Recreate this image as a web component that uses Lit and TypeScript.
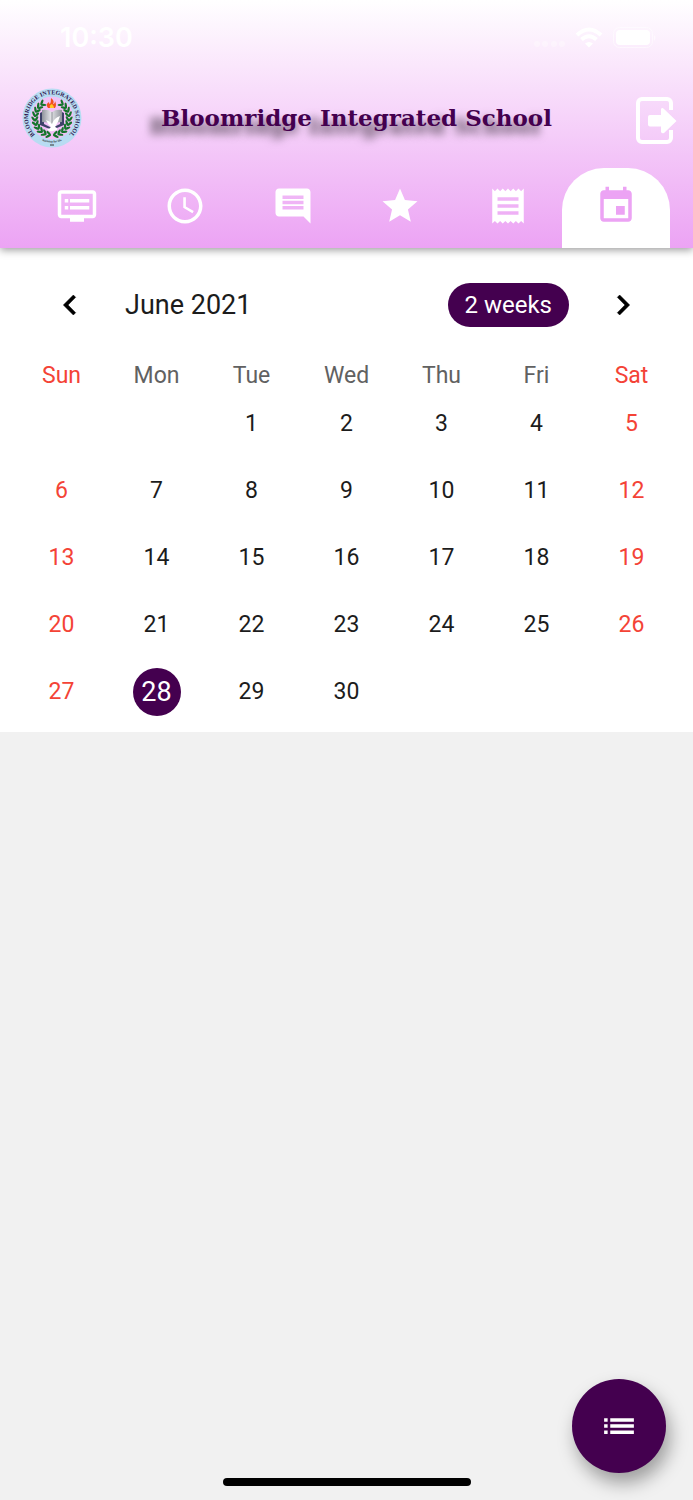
import { LitElement, html, css, svg } from "lit";
import { customElement, state } from "lit/decorators.js";
import { classMap } from "lit/directives/class-map.js";

const WEEKDAYS = ["Sun", "Mon", "Tue", "Wed", "Thu", "Fri", "Sat"];

const TABS = [
  {
    label: "Notice board",
    path: "M21 3H3c-1.1 0-2 .9-2 2v12c0 1.1.9 2 2 2h5v2h8v-2h5c1.1 0 1.99-.9 1.99-2L23 5c0-1.1-.9-2-2-2zm0 14H3V5h18v12zm-2-9H8v2h11V8zm0 4H8v2h11v-2zM7 8H5v2h2V8zm0 4H5v2h2v-2z",
  },
  {
    label: "Timetable",
    path: "M11.99 2C6.47 2 2 6.48 2 12s4.47 10 9.99 10C17.52 22 22 17.52 22 12S17.52 2 11.99 2zM12 20c-4.42 0-8-3.58-8-8s3.58-8 8-8 8 3.58 8 8-3.58 8-8 8zm.5-13H11v6l5.25 3.15.75-1.23-4.5-2.67z",
  },
  {
    label: "Messages",
    path: "M21.99 4c0-1.1-.89-2-1.99-2H4c-1.1 0-2 .9-2 2v12c0 1.1.9 2 2 2h14l4 4-.01-18zM18 14H6v-2h12v2zm0-3H6V9h12v2zm0-3H6V6h12v2z",
  },
  {
    label: "Results",
    path: "M12 17.27L18.18 21l-1.64-7.03L22 9.24l-7.19-.61L12 2 9.19 8.63 2 9.24l5.46 4.73L5.82 21z",
  },
  {
    label: "Receipts",
    path: "M18 17H6v-2h12v2zm0-4H6v-2h12v2zm0-4H6V7h12v2zM3 22l1.5-1.5L6 22l1.5-1.5L9 22l1.5-1.5L12 22l1.5-1.5L15 22l1.5-1.5L18 22l1.5-1.5L21 22V2l-1.5 1.5L18 2l-1.5 1.5L15 2l-1.5 1.5L12 2l-1.5 1.5L9 2 7.5 3.5 6 2 4.5 3.5 3 2v20z",
  },
  {
    label: "Calendar",
    path: "M17 12h-5v5h5v-5zM16 1v2H8V1H6v2H5c-1.11 0-1.99.9-1.99 2L3 19c0 1.1.89 2 2 2h14c1.1 0 2-.9 2-2V5c0-1.1-.9-2-2-2h-1V1h-2zm3 18H5V8h14v11z",
  },
];

@customElement("school-crest")
export class SchoolCrest extends LitElement {
  static styles = css`
    :host { display: block; width: 60px; height: 60px; }
    .crest { display: block; width: 100%; height: 100%; overflow: visible; }
    .ring-text { font: bold 6px "Liberation Serif", serif; fill: #2f1550; }
    .motto { font: bold 3px "Liberation Serif", serif; fill: #222; }
  `;

  render() {
    const leaves = [];
    for (let i = 0; i < 10; i++) {
      const a = 12 + i * 15;
      for (const side of [1, -1]) {
        const turn = side * (180 - a);
        leaves.push(svg`<g transform=${`rotate(${turn} 30 30)`}>
          <ellipse cx="30" cy="11.4" rx="3" ry="1.2" transform=${`rotate(${side * 35} 30 11.4)`}></ellipse>
          <ellipse cx="30" cy="14.4" rx="3" ry="1.2" transform=${`rotate(${side * -35} 30 14.4)`}></ellipse>
        </g>`);
      }
    }
    return html`<svg class="crest" viewBox="0 0 60 60" role="img" aria-label="School crest">
      <defs>
        <path id="ring" d="M15 48.5A23.800 23.800 0 1 1 45 48.5"></path>
        <path id="base" d="M18 52Q30 57 42 52"></path>
        <linearGradient id="page" x1="0" x2="1">
          <stop offset="0" stop-color="#8f939b"></stop>
          <stop offset=".45" stop-color="#e4e5e8"></stop>
          <stop offset="1" stop-color="#8f939b"></stop>
        </linearGradient>
      </defs>
      <circle cx="30" cy="30" r="29.5" fill="#b8dcf2"></circle>
      <circle cx="30" cy="30" r="21.5" fill="#f2c0f6"></circle>
      <g fill="#14752c">${leaves}</g>
      <path d="M18 25l4-2v13l8 4 8-4V23l4 2v12l-12 5-12-5z" fill="#3d4268"></path>
      <path d="M20 22q6-1 10 2q4-3 10-2v12q-6 0-10 3q-4-3-10-3z" fill="url(#page)"></path>
      <path d="M30 24v12" stroke="#70747d" stroke-width=".7"></path>
      <path d="M26 20q-3-4 1-6q0 2 1 2q1-2 1-6q4 3 2 6q2 0 2-3q2 4 0 7z" fill="#f4511e"></path>
      <path d="M28 20q-1-3 2-4q2 2 2 4z" fill="#ffc928"></path>
      <path d="M24 32q4 1 6 4q2-6 8-8q-2 7-5 11q3 1 2 3l-4 1q-4 1-6-2q3 0 4-2q-3-2-5-7z" fill="#fff"></path>
      <text class="ring-text"><textPath href="#ring" startOffset="50%" text-anchor="middle">BLOOMRIDGE INTEGRATED SCHOOL</textPath></text>
      <text class="motto"><textPath href="#base" startOffset="50%" text-anchor="middle">learning for life</textPath></text>
      <path d="M28 56.500h4v1h-4z" fill="#333"></path>
    </svg>`;
  }
}

@customElement("month-calendar")
export class MonthCalendar extends LitElement {
  static styles = css`
    :host { display: block; background: #fff; padding: 28px 14px 7px; }
    button { font: inherit; color: inherit; border: 0; background: none; padding: 0; cursor: pointer; }
    .bar { display: flex; align-items: center; height: 58px; padding: 0 28px; }
    .arrow { display: grid; place-items: center; width: 56px; height: 56px; color: #000; }
    .arrow svg { width: 40px; height: 40px; fill: currentColor; }
    .month { flex: 1; margin: 0; padding-left: 27px; font-size: 27px; font-weight: 400; line-height: 40px; }
    .format { height: 44px; padding: 0 17px; margin-right: 26px; border-radius: 22px; background: #44004f; color: #fff; font-size: 24px; }
    .grid { width: 100%; table-layout: fixed; border-collapse: collapse; margin-top: 28px; }
    .grid th { height: 28px; padding: 0; font-size: 23px; font-weight: 400; line-height: 28px; color: #616161; }
    .grid td { height: 67px; padding: 0; text-align: center; }
    .day { width: 48px; height: 48px; border-radius: 50%; font-size: 23px; line-height: 48px; }
    .grid .weekend { color: #f44336; }
    .grid .selected { background: #44004f; color: #fff; font-size: 27px; }
  `;

  @state() private selected = 28;

  private weeks(): (number | null)[][] {
    const first = new Date(2021, 5, 1).getDay();
    return Array.from({ length: 5 }, (_, w) =>
      WEEKDAYS.map((_, d) => {
        const n = w * 7 + d - first + 1;
        return n >= 1 && n <= 30 ? n : null;
      })
    );
  }

  render() {
    const weekend = (i: number) => i === 0 || i === 6;
    return html`
      <div class="bar">
        <button class="arrow" aria-label="Previous month">
          <svg viewBox="0 0 24 24"><path d="M15.41 7.41L14 6l-6 6 6 6 1.41-1.41L10.83 12z" stroke="#000" stroke-width=".3"></path></svg>
        </button>
        <h2 class="month">June 2021</h2>
        <button class="format">2 weeks</button>
        <button class="arrow" aria-label="Next month">
          <svg viewBox="0 0 24 24"><path d="M10 6L8.59 7.41 13.17 12l-4.58 4.59L10 18l6-6z" stroke="#000" stroke-width=".3"></path></svg>
        </button>
      </div>
      <table class="grid">
        <thead>
          <tr>${WEEKDAYS.map((d, i) => html`<th scope="col" class=${classMap({ weekend: weekend(i) })}>${d}</th>`)}</tr>
        </thead>
        <tbody>
          ${this.weeks().map(
            (week) => html`<tr>
              ${week.map((n, i) =>
                n === null
                  ? html`<td></td>`
                  : html`<td><button
                      class=${classMap({ day: true, weekend: weekend(i), selected: n === this.selected })}
                      @click=${() => (this.selected = n)}
                    >${n}</button></td>`
              )}
            </tr>`
          )}
        </tbody>
      </table>
    `;
  }
}

@customElement("app-root")
export class AppRoot extends LitElement {
  static styles = css`
    :host {
      display: flex;
      flex-direction: column;
      position: relative;
      min-height: 100vh;
      background: #f1f1f1;
      color: #1c1c1c;
      font-family: Roboto, "Liberation Sans", sans-serif;
    }
    button { border: 0; background: none; padding: 0; cursor: pointer; }
    .header {
      position: relative;
      background: linear-gradient(#fff, #eca3f4);
      box-shadow: 0 2px 8px rgba(0, 0, 0, 0.4);
    }
    .status { display: flex; align-items: center; height: 76px; padding: 0 36px 0 60px; color: #fff; }
    .time { flex: 1; font: 600 27px/32px Inter, sans-serif; }
    .signals { display: block; width: 126px; height: 24px; }
    .appbar { display: flex; align-items: center; height: 84px; padding: 0 14px 0 22px; }
    .title {
      flex: 1;
      margin: 0;
      text-align: center;
      white-space: nowrap;
      font: bold 23px/32px "DejaVu Serif", serif;
      color: #44004f;
      text-shadow: -12px 8px 8px rgba(0, 0, 0, 0.6);
    }
    .logout { width: 48px; height: 52px; }
    .logout svg { display: block; width: 48px; height: 52px; }
    .tabs { display: flex; padding: 8px 23px 0; }
    .tab { flex: 1; display: grid; place-items: center; height: 80px; padding-bottom: 4px; color: #fff; }
    .tab.active { background: #fff; color: #eca3f4; border-radius: 42px 42px 0 0; }
    .tab svg { width: 42px; height: 42px; fill: currentColor; }
    .fab {
      position: absolute;
      right: 27px;
      bottom: 27px;
      display: grid;
      place-items: center;
      width: 94px;
      height: 94px;
      border-radius: 50%;
      background: #44004f;
      box-shadow: 4px 10px 18px rgba(0, 0, 0, 0.35);
    }
    .fab svg { width: 42px; height: 42px; fill: #fff; }
    .home { position: absolute; left: 50%; bottom: 14px; width: 248px; height: 8px; margin-left: -124px; border-radius: 4px; background: #000; }
  `;

  @state() private active = 5;

  render() {
    return html`
      <header class="header">
        <div class="status">
          <span class="time">10:30</span>
          <svg class="signals" viewBox="0 0 126 24" fill="#fff" aria-hidden="true">
            <g opacity=".35">
              <circle cx="6" cy="18" r="3"></circle><circle cx="14" cy="18" r="3"></circle>
              <circle cx="23" cy="18" r="3"></circle><circle cx="31" cy="18" r="3"></circle>
            </g>
            <g fill="none" stroke="#fff" stroke-width="4">
              <path d="M46 9Q58 -2 70 9"></path><path d="M50.500 13.500Q58 7 65.500 13.500"></path>
            </g>
            <path d="M54 17.500Q58 14.500 62 17.500L58 21.500z"></path>
            <rect x="82.500" y="1.500" width="39" height="20" rx="6" fill="none" stroke="#fff" stroke-opacity=".5"></rect>
            <rect x="85" y="4" width="34" height="15" rx="4"></rect>
            <path d="M123 9q3 2.500 0 6z" opacity=".6"></path>
          </svg>
        </div>
        <div class="appbar">
          <school-crest></school-crest>
          <h1 class="title">Bloomridge Integrated School</h1>
          <button class="logout" aria-label="Log out">
            <svg viewBox="0 0 48 52">
              <path d="M40 18V11a4 4 0 0 0-4-4H11a4 4 0 0 0-4 4v35a4 4 0 0 0 4 4h25a4 4 0 0 0 4-4v-8" fill="none" stroke="#fff" stroke-width="4"></path>
              <path d="M19 23h11v-6q1-2 3 0l12.500 12-12.500 12q-2 1-3-1v-5.500H19q-2 0-2-2V25q0-2 2-2z" fill="#fff"></path>
            </svg>
          </button>
        </div>
        <nav class="tabs">
          ${TABS.map(
            (t, i) => html`<button
              class=${classMap({ tab: true, active: i === this.active })}
              aria-label=${t.label}
              @click=${() => (this.active = i)}
            ><svg viewBox="0 0 24 24"><path d=${t.path}></path></svg></button>`
          )}
        </nav>
      </header>
      <month-calendar></month-calendar>
      <button class="fab" aria-label="Event list">
        <svg viewBox="0 0 24 24"><path d="M3.500 13h2v-2h-2v2zm0 3.500h2v-2h-2v2zm0-7h2v-2h-2v2zm3.500 3.500h13.500v-2H7v2zm0 3.500h13.500v-2H7v2zM7 7.500v2h13.500v-2H7z"></path></svg>
      </button>
      <div class="home"></div>
    `;
  }
}
